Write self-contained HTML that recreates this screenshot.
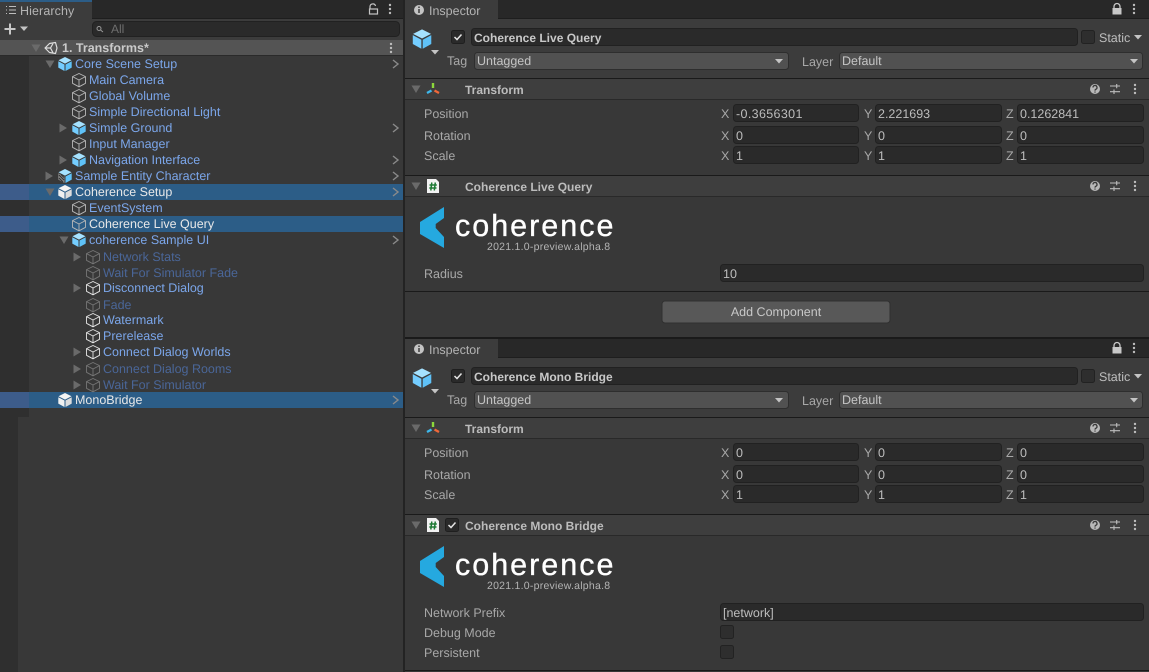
<!DOCTYPE html>
<html><head><meta charset="utf-8"><title>Unity Editor</title>
<style>
html,body{margin:0;padding:0;background:#383838;width:1149px;height:672px;overflow:hidden}
svg{display:block}
text{font-family:"Liberation Sans",sans-serif;font-size:12.5px;fill:#bdbdbd;letter-spacing:0;white-space:pre;text-rendering:geometricPrecision}
.l{fill:#7ba6ea}.d{fill:#4a6698}.w{fill:#e8e8e8}
.b{font-weight:bold;font-size:12px;letter-spacing:0;fill:#bcbcbc}
.g{fill:#a8a8a8}
.fld{fill:#2a2a2a;stroke:#212121}
.dd{fill:#515151;stroke:#2e2e2e}
.logo{font-size:30.5px;fill:#ffffff;letter-spacing:2px;stroke:#ffffff;stroke-width:.35px}
.ver{font-size:10.5px;fill:#b4b4b4;letter-spacing:.25px}
</style></head><body>
<svg width="1149" height="672" viewBox="0 0 1149 672" xmlns="http://www.w3.org/2000/svg">
<defs>
<g id="co"><path d="M8 1.500L14.500 4.600V11.300L8 14.800L1.500 11.300V4.600ZM1.500 4.600L8 8L14.500 4.600M8 8V14.800" fill="none" stroke="#b8b8b8" stroke-width=".9" stroke-linejoin="round"/></g>
<g id="cw"><path d="M8 1.500L14.500 4.600V11.300L8 14.800L1.500 11.300V4.600ZM1.500 4.600L8 8L14.500 4.600M8 8V14.800" fill="none" stroke="#e6e6e6" stroke-width=".9" stroke-linejoin="round"/></g>
<g id="cd"><path d="M8 1.500L14.500 4.600V11.300L8 14.800L1.500 11.300V4.600ZM1.500 4.600L8 8L14.500 4.600M8 8V14.800" fill="none" stroke="#767676" stroke-width=".9" stroke-linejoin="round"/></g>
<g id="cb"><path d="M8 1L14.500 4.300L8 7.600L1.500 4.300Z" fill="#a5e2ff"/><path d="M1.300 5.200L7.500 8.500V15L1.300 11.600Z" fill="#74cdff"/><path d="M14.700 5.200L8.500 8.500V15L14.700 11.600Z" fill="#5fc2f8"/></g>
<g id="cs"><path d="M8 1L14.500 4.300L8 7.600L1.500 4.300Z" fill="#f4f4f4"/><path d="M1.300 5.200L7.500 8.500V15L1.300 11.600Z" fill="#f0f0f0"/><path d="M14.700 5.200L8.500 8.500V15L14.700 11.600Z" fill="#dcdcdc"/></g>
<g id="ch"><path d="M8 1L14.500 4.300L8 7.600L1.500 4.300Z" fill="#a5e2ff"/><path d="M1.300 5.200L7.500 8.500V15L1.300 11.600Z" fill="#8a8a8a"/><path d="M2 7L7 12M2 10L6 14M4 6.500L7 9.500" stroke="#333" stroke-width="1"/><path d="M14.700 5.200L8.500 8.500V15L14.700 11.600Z" fill="#5fc2f8"/></g>
<path id="ad" d="M-4.500 -3.500H4.500L0 4Z" fill="#6a6a6a"/>
<path id="ar" d="M-3.500 -4.500L4 0L-3.500 4.500Z" fill="#6a6a6a"/>
<path id="sv" d="M-2 -4L3 0L-2 4" fill="none" stroke="#8a8a8a" stroke-width="1.400"/>
<g id="kb"><circle cx="0" cy="-4" r="1.200" fill="#bdbdbd"/><circle cx="0" cy="0" r="1.200" fill="#bdbdbd"/><circle cx="0" cy="4" r="1.200" fill="#bdbdbd"/></g>
<path id="tri" d="M-4 -2H4L0 2.500Z" fill="#c4c4c4"/>
<g id="hp"><circle r="5" fill="#b8b8b8"/><path d="M-2 -1.500A2 2 0 1 1 .8 .3Q0 .8 0 1.600M0 2.500V3.600" fill="none" stroke="#3a3a3a" stroke-width="1.300"/></g>
<g id="sl"><path d="M-5 -3H5M-5 2.700H5M1.700 -5V-.8M-1 .5V5" stroke="#bdbdbd" stroke-width="1.100" fill="none"/></g>
<g id="ck"><rect x=".5" y=".5" width="13" height="13" rx="2" fill="#2a2a2a" stroke="#1f1f1f"/><path d="M3.500 7L6 9.500L10.500 4.500" fill="none" stroke="#e4e4e4" stroke-width="1.500"/></g>
<rect id="cu" x=".5" y=".5" width="13" height="13" rx="2" fill="#2e2e2e" stroke="#222"/>
<path id="lg" d="M15 0V11L6.700 17V21L15 30V41L-9 27V15Z" fill="#25a9e0"/>
<g id="sc"><path d="M0 0H9L12 3V14H0Z" fill="#f2f2f2"/><path d="M4.800 3.500L3.800 11.500M8.300 3.500L7.300 11.500M2.500 6H9.800M2.300 9H9.500" stroke="#1f7a35" stroke-width="1.500"/></g>
<g id="tf"><path d="M0 -6V-1" stroke="#8cd83c" stroke-width="2.400"/><path d="M-1.500 1.500L-6 4" stroke="#3db8ec" stroke-width="2.400"/><path d="M1.500 1.500L6 4" stroke="#f0683a" stroke-width="2.400"/></g>
</defs>

<rect width="1149" height="672" fill="#383838"/>

<!-- HIERARCHY -->
<rect x="0" y="0" width="403" height="19" fill="#282828"/>
<rect x="0" y="0" width="92" height="19" fill="#3c3c3c"/>
<rect x="0" y="0" width="92" height="2" fill="#2c5d87"/>
<rect x="0" y="19" width="403" height="21" fill="#3c3c3c"/>
<rect x="92" y="18" width="311" height="1" fill="#1e1e1e"/>
<path d="M6 7h1M6 10.500h1M6 14h1M9 7h7M9 10.500h7M9 14h7" stroke="#bdbdbd" stroke-width="1" transform="translate(0,-.5)"/>
<text x="20" y="15" style="fill:#b4b4b4;letter-spacing:.1px">Hierarchy</text>
<path d="M370 9V6.500a2.800 2.800 0 0 1 5.500 -.5" fill="none" stroke="#c4c4c4" stroke-width="1.200"/><rect x="369.500" y="9" width="8" height="5" fill="none" stroke="#c4c4c4" stroke-width="1.200"/>
<use href="#kb" x="390" y="9"/>
<path d="M10 23.500V34.500M4.500 29H15.500" stroke="#c8c8c8" stroke-width="2"/>
<use href="#tri" x="24" y="28.500"/>
<rect x="92.500" y="21.500" width="307" height="15" rx="4" fill="#2a2a2a" stroke="#212121"/>
<circle cx="99" cy="28.500" r="2" fill="none" stroke="#999"/><path d="M100.500 30L103 32" stroke="#999"/>
<text x="111" y="33" style="fill:#6e6e6e;font-size:12px">All</text>

<rect x="0" y="40" width="403" height="15" fill="#545454"/>
<rect x="0" y="55" width="403" height="1" fill="#2a2a2a"/>
<rect x="0" y="56" width="29" height="361" fill="#2f2f2f"/>
<rect x="0" y="417" width="18" height="255" fill="#2f2f2f"/>
<rect x="29" y="56" width="374" height="361" fill="#383838"/>
<use href="#ad" x="36" y="48" fill="#6a6a6a"/>
<path d="M45 48L49.500 43.500L55.500 42.500L57 48L55.500 53.500L49.500 52.500ZM45 48H50.500L53 43.500M50.500 48L53 52.800" fill="none" stroke="#dcdcdc" stroke-width="1.200" stroke-linejoin="round"/>
<text x="62" y="52" class="b" style="fill:#cacaca;font-size:12.5px">1. Transforms*</text>
<use href="#kb" x="391" y="48"/>

<rect x="0" y="184" width="29" height="16" fill="#3d5c8a"/><rect x="29" y="184" width="374" height="16" fill="#2c5d87"/>
<rect x="0" y="216" width="29" height="16" fill="#3d5c8a"/><rect x="29" y="216" width="374" height="16" fill="#2c5d87"/>
<rect x="0" y="392" width="29" height="16" fill="#3d5c8a"/><rect x="29" y="392" width="374" height="16" fill="#2c5d87"/>

<use href="#ad" x="50" y="64"/><use href="#cb" x="57" y="56"/><text x="75" y="68" class="l">Core Scene Setup</text><use href="#sv" x="395" y="64"/>
<use href="#co" x="71" y="72"/><text x="89" y="84" class="l">Main Camera</text>
<use href="#co" x="71" y="88"/><text x="89" y="100" class="l">Global Volume</text>
<use href="#co" x="71" y="104"/><text x="89" y="116" class="l">Simple Directional Light</text>
<use href="#ar" x="63" y="128"/><use href="#cb" x="71" y="120"/><text x="89" y="132" class="l">Simple Ground</text><use href="#sv" x="395" y="128"/>
<use href="#co" x="71" y="136"/><text x="89" y="148" class="l">Input Manager</text>
<use href="#ar" x="63" y="160"/><use href="#cb" x="71" y="152"/><text x="89" y="164" class="l">Navigation Interface</text><use href="#sv" x="395" y="160"/>
<use href="#ar" x="49" y="176"/><use href="#ch" x="57" y="168"/><text x="75" y="180" class="l">Sample Entity Character</text><use href="#sv" x="395" y="176"/>
<use href="#ad" x="50" y="192"/><use href="#cs" x="57" y="184"/><text x="75" y="196" class="w">Coherence Setup</text><use href="#sv" x="395" y="192"/>
<use href="#co" x="71" y="200"/><text x="89" y="212" class="l">EventSystem</text>
<use href="#co" x="71" y="216"/><text x="89" y="228" class="w">Coherence Live Query</text>
<use href="#ad" x="64" y="240"/><use href="#cb" x="71" y="232"/><text x="89" y="244" class="l">coherence Sample UI</text><use href="#sv" x="395" y="240"/>
<use href="#ar" x="77" y="257"/><use href="#cd" x="85" y="249"/><text x="103" y="261" class="d">Network Stats</text>
<use href="#cd" x="85" y="265"/><text x="103" y="277" class="d">Wait For Simulator Fade</text>
<use href="#ar" x="77" y="288"/><use href="#cw" x="85" y="280"/><text x="103" y="292" class="l">Disconnect Dialog</text>
<use href="#cd" x="85" y="297"/><text x="103" y="309" class="d">Fade</text>
<use href="#cw" x="85" y="312"/><text x="103" y="324" class="l">Watermark</text>
<use href="#cw" x="85" y="328"/><text x="103" y="340" class="l">Prerelease</text>
<use href="#ar" x="77" y="352"/><use href="#cw" x="85" y="344"/><text x="103" y="356" class="l">Connect Dialog Worlds</text>
<use href="#ar" x="77" y="369"/><use href="#cd" x="85" y="361"/><text x="103" y="373" class="d">Connect Dialog Rooms</text>
<use href="#ar" x="77" y="385"/><use href="#cd" x="85" y="377"/><text x="103" y="389" class="d">Wait For Simulator</text>
<use href="#cs" x="57" y="392"/><text x="75" y="404" class="w">MonoBridge</text><use href="#sv" x="395" y="400"/>

<rect x="403" y="0" width="2" height="672" fill="#232323"/>

<!-- INSPECTOR 1 -->
<rect x="405" y="0" width="744" height="19" fill="#282828"/>
<rect x="405" y="18" width="744" height="1" fill="#1e1e1e"/>
<rect x="405" y="0" width="93" height="19" fill="#3c3c3c"/>
<circle cx="419" cy="10" r="5" fill="#c4c4c4"/><path d="M419 9V13M419 6.500V8" stroke="#333" stroke-width="1.400"/>
<text x="429" y="15" style="fill:#b4b4b4">Inspector</text>
<rect x="1112.500" y="8" width="9" height="6.500" fill="#c8c8c8"/><path d="M1114 8.500V6.500a3 3 0 0 1 6 0V8.500" fill="none" stroke="#c8c8c8" stroke-width="1.300"/>
<use href="#kb" x="1134" y="9"/>
<rect x="405" y="19" width="744" height="59" fill="#3c3c3c"/>
<use href="#cb" transform="translate(411,28) scale(1.38)"/>
<path d="M431 50H439L435 54.500Z" fill="#c4c4c4"/>
<use href="#ck" x="451" y="30"/>
<rect x="471.500" y="28.500" width="606" height="17" rx="3" class="fld"/>
<text x="474" y="42" class="b" style="fill:#c8c8c8">Coherence Live Query</text>
<use href="#cu" x="1081" y="30"/>
<text x="1099" y="42">Static</text><use href="#tri" x="1138" y="37"/>
<text x="447" y="65" class="g">Tag</text>
<rect x="474.500" y="52.500" width="314" height="17" rx="3" class="dd"/>
<text x="477" y="65" style="fill:#c4c4c4">Untagged</text><use href="#tri" x="779" y="61"/>
<text x="802" y="66" class="g">Layer</text>
<rect x="839.500" y="52.500" width="303" height="17" rx="3" class="dd"/>
<text x="842" y="65" style="fill:#c4c4c4">Default</text><use href="#tri" x="1134" y="61"/>
<rect x="405" y="78" width="744" height="1" fill="#1a1a1a"/>
<rect x="405" y="79" width="744" height="20" fill="#3e3e3e"/>
<rect x="405" y="99" width="744" height="1" fill="#292929"/>
<use href="#ad" x="416" y="89"/><use href="#tf" x="433" y="89"/>
<text x="465" y="94" class="b">Transform</text>
<use href="#hp" x="1095" y="89"/><use href="#sl" x="1115" y="89"/><use href="#kb" x="1135" y="89"/>

<text x="424" y="118" class="g">Position</text>
<text x="721" y="118" class="g">X</text><rect x="733.500" y="104.500" width="125" height="17" rx="3" class="fld"/><text x="736" y="118" style="letter-spacing:.35px">-0.3656301</text>
<text x="864" y="118" class="g">Y</text><rect x="875.500" y="104.500" width="126" height="17" rx="3" class="fld"/><text x="878" y="118">2.221693</text>
<text x="1006" y="118" class="g">Z</text><rect x="1017.500" y="104.500" width="126" height="17" rx="3" class="fld"/><text x="1020" y="118">0.1262841</text>
<text x="424" y="140" class="g">Rotation</text>
<text x="721" y="140" class="g">X</text><rect x="733.500" y="126.500" width="125" height="17" rx="3" class="fld"/><text x="736" y="140">0</text>
<text x="864" y="140" class="g">Y</text><rect x="875.500" y="126.500" width="126" height="17" rx="3" class="fld"/><text x="878" y="140">0</text>
<text x="1006" y="140" class="g">Z</text><rect x="1017.500" y="126.500" width="126" height="17" rx="3" class="fld"/><text x="1020" y="140">0</text>
<text x="424" y="160" class="g">Scale</text>
<text x="721" y="160" class="g">X</text><rect x="733.500" y="146.500" width="125" height="17" rx="3" class="fld"/><text x="736" y="160">1</text>
<text x="864" y="160" class="g">Y</text><rect x="875.500" y="146.500" width="126" height="17" rx="3" class="fld"/><text x="878" y="160">1</text>
<text x="1006" y="160" class="g">Z</text><rect x="1017.500" y="146.500" width="126" height="17" rx="3" class="fld"/><text x="1020" y="160">1</text>

<rect x="405" y="175" width="744" height="1" fill="#1a1a1a"/>
<rect x="405" y="176" width="744" height="20" fill="#3e3e3e"/>
<rect x="405" y="196" width="744" height="1" fill="#292929"/>
<use href="#ad" x="416" y="186"/><use href="#sc" x="427" y="179"/>
<text x="465" y="191" class="b">Coherence Live Query</text>
<use href="#hp" x="1095" y="186"/><use href="#sl" x="1115" y="186"/><use href="#kb" x="1135" y="186"/>
<use href="#lg" x="429" y="207"/>
<text x="455" y="236" class="logo">coherence</text>
<text x="487" y="250" class="ver">2021.1.0-preview.alpha.8</text>
<text x="424" y="278" class="g">Radius</text>
<rect x="720.500" y="264.500" width="423" height="17" rx="3" class="fld"/><text x="723" y="278">10</text>
<rect x="405" y="291" width="744" height="1" fill="#1a1a1a"/>
<rect x="662" y="301" width="228" height="22" rx="3" fill="#585858" stroke="#303030"/>
<text x="776" y="316" text-anchor="middle" style="fill:#c8c8c8">Add Component</text>
<rect x="405" y="337" width="744" height="2" fill="#1a1a1a"/>

<!-- INSPECTOR 2 -->
<rect x="405" y="339" width="744" height="19" fill="#282828"/>
<rect x="405" y="357" width="744" height="1" fill="#1e1e1e"/>
<rect x="405" y="339" width="93" height="19" fill="#3c3c3c"/>
<circle cx="419" cy="349" r="5" fill="#c4c4c4"/><path d="M419 348V352M419 345.500V347" stroke="#333" stroke-width="1.400"/>
<text x="429" y="354" style="fill:#b4b4b4">Inspector</text>
<rect x="1112.500" y="347" width="9" height="6.500" fill="#c8c8c8"/><path d="M1114 347.500V345.500a3 3 0 0 1 6 0V347.500" fill="none" stroke="#c8c8c8" stroke-width="1.300"/>
<use href="#kb" x="1134" y="348"/>
<rect x="405" y="358" width="744" height="59" fill="#3c3c3c"/>
<use href="#cb" transform="translate(411,367) scale(1.38)"/>
<path d="M431 389H439L435 393.500Z" fill="#c4c4c4"/>
<use href="#ck" x="451" y="369"/>
<rect x="471.500" y="367.500" width="606" height="17" rx="3" class="fld"/>
<text x="474" y="381" class="b" style="fill:#c8c8c8">Coherence Mono Bridge</text>
<use href="#cu" x="1081" y="369"/>
<text x="1099" y="381">Static</text><use href="#tri" x="1138" y="376"/>
<text x="447" y="404" class="g">Tag</text>
<rect x="474.500" y="391.500" width="314" height="17" rx="3" class="dd"/>
<text x="477" y="404" style="fill:#c4c4c4">Untagged</text><use href="#tri" x="779" y="400"/>
<text x="802" y="405" class="g">Layer</text>
<rect x="839.500" y="391.500" width="303" height="17" rx="3" class="dd"/>
<text x="842" y="404" style="fill:#c4c4c4">Default</text><use href="#tri" x="1134" y="400"/>
<rect x="405" y="417" width="744" height="1" fill="#1a1a1a"/>
<rect x="405" y="418" width="744" height="20" fill="#3e3e3e"/>
<rect x="405" y="438" width="744" height="1" fill="#292929"/>
<use href="#ad" x="416" y="428"/><use href="#tf" x="433" y="428"/>
<text x="465" y="433" class="b">Transform</text>
<use href="#hp" x="1095" y="428"/><use href="#sl" x="1115" y="428"/><use href="#kb" x="1135" y="428"/>

<text x="424" y="457" class="g">Position</text>
<text x="721" y="457" class="g">X</text><rect x="733.500" y="443.500" width="125" height="17" rx="3" class="fld"/><text x="736" y="457">0</text>
<text x="864" y="457" class="g">Y</text><rect x="875.500" y="443.500" width="126" height="17" rx="3" class="fld"/><text x="878" y="457">0</text>
<text x="1006" y="457" class="g">Z</text><rect x="1017.500" y="443.500" width="126" height="17" rx="3" class="fld"/><text x="1020" y="457">0</text>
<text x="424" y="479" class="g">Rotation</text>
<text x="721" y="479" class="g">X</text><rect x="733.500" y="465.500" width="125" height="17" rx="3" class="fld"/><text x="736" y="479">0</text>
<text x="864" y="479" class="g">Y</text><rect x="875.500" y="465.500" width="126" height="17" rx="3" class="fld"/><text x="878" y="479">0</text>
<text x="1006" y="479" class="g">Z</text><rect x="1017.500" y="465.500" width="126" height="17" rx="3" class="fld"/><text x="1020" y="479">0</text>
<text x="424" y="499" class="g">Scale</text>
<text x="721" y="499" class="g">X</text><rect x="733.500" y="485.500" width="125" height="17" rx="3" class="fld"/><text x="736" y="499">1</text>
<text x="864" y="499" class="g">Y</text><rect x="875.500" y="485.500" width="126" height="17" rx="3" class="fld"/><text x="878" y="499">1</text>
<text x="1006" y="499" class="g">Z</text><rect x="1017.500" y="485.500" width="126" height="17" rx="3" class="fld"/><text x="1020" y="499">1</text>

<rect x="405" y="514" width="744" height="1" fill="#1a1a1a"/>
<rect x="405" y="515" width="744" height="20" fill="#3e3e3e"/>
<rect x="405" y="535" width="744" height="1" fill="#292929"/>
<use href="#ad" x="416" y="525"/><use href="#sc" x="427" y="518"/>
<use href="#ck" x="445" y="518"/>
<text x="465" y="530" class="b">Coherence Mono Bridge</text>
<use href="#hp" x="1095" y="525"/><use href="#sl" x="1115" y="525"/><use href="#kb" x="1135" y="525"/>
<use href="#lg" x="429" y="546"/>
<text x="455" y="575" class="logo">coherence</text>
<text x="487" y="589" class="ver">2021.1.0-preview.alpha.8</text>
<text x="424" y="617" class="g">Network Prefix</text>
<rect x="720.500" y="603.500" width="423" height="17" rx="3" class="fld"/><text x="723" y="617">[network]</text>
<text x="424" y="637" class="g">Debug Mode</text>
<use href="#cu" x="720" y="625"/>
<text x="424" y="657" class="g">Persistent</text>
<use href="#cu" x="720" y="645"/>
<rect x="405" y="670" width="744" height="1" fill="#1a1a1a"/>
</svg>
</body></html>
